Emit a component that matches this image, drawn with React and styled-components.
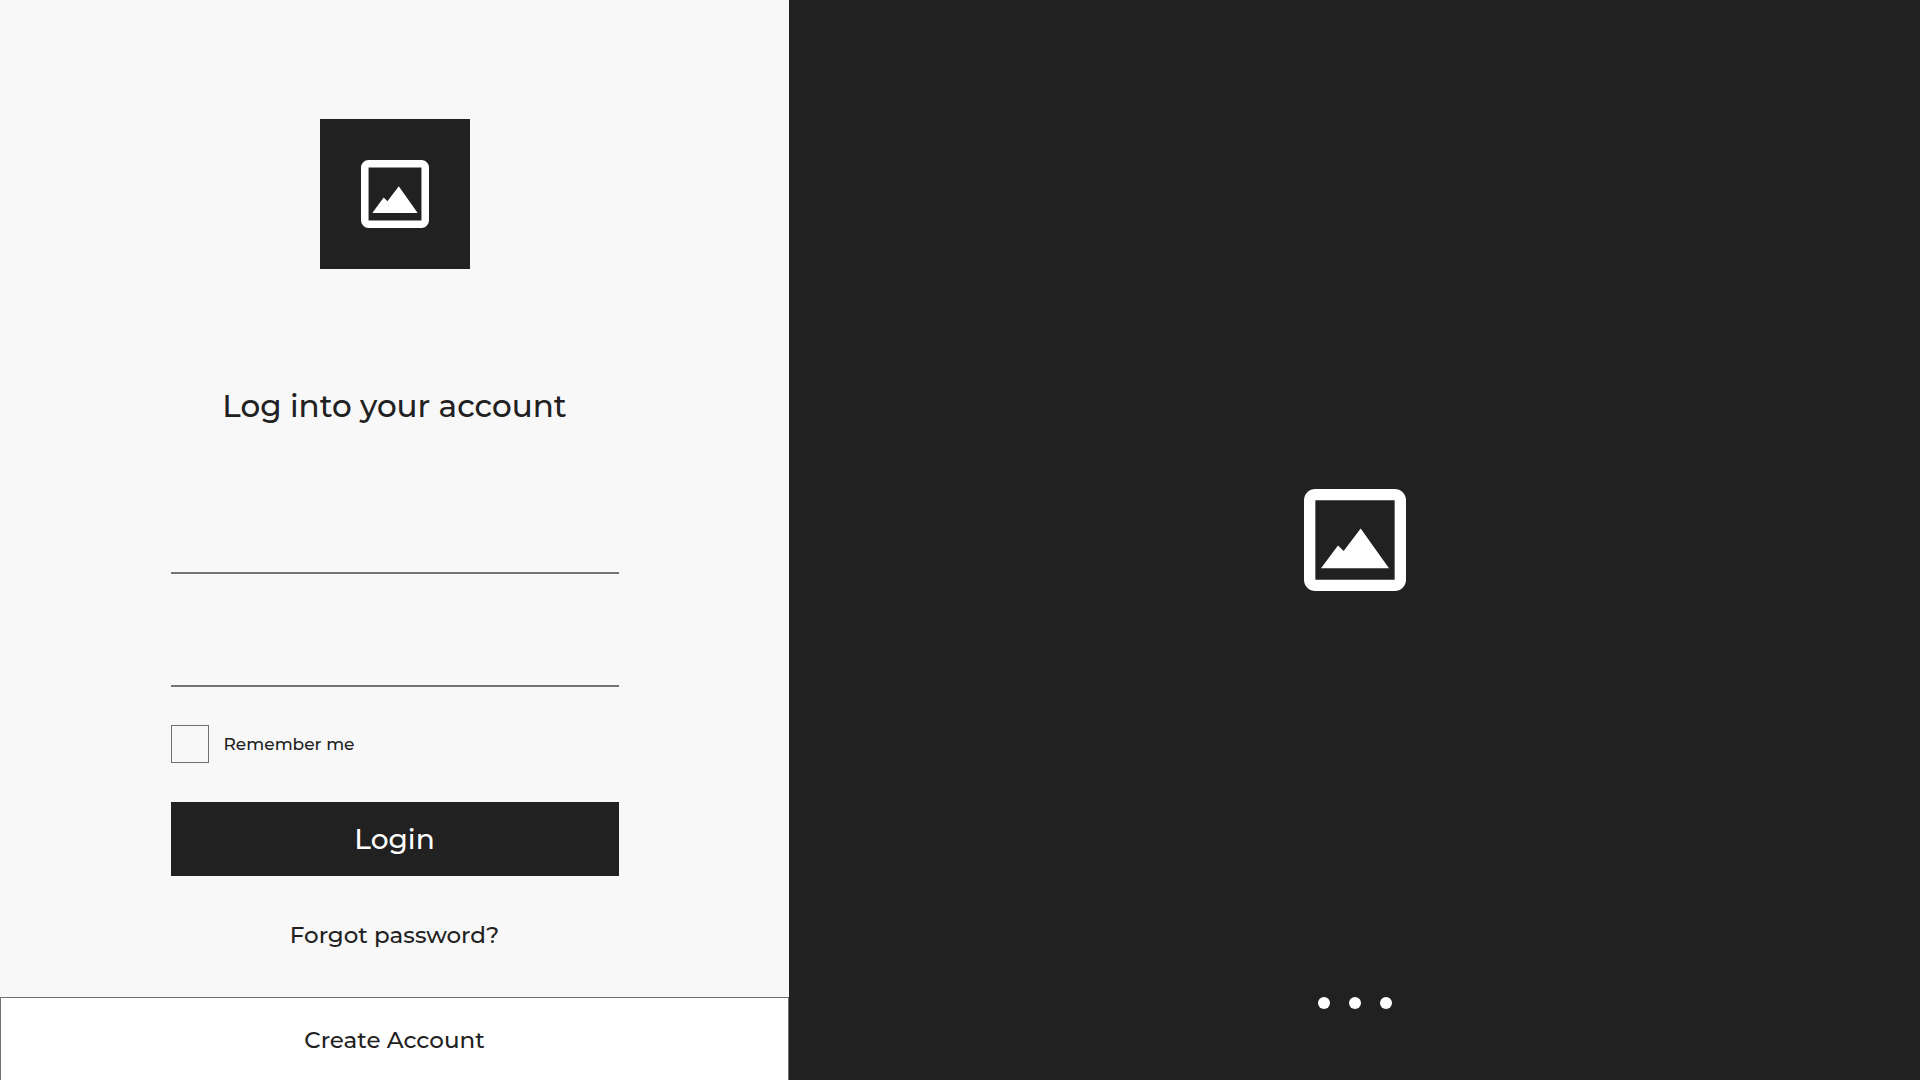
import React from "react";
import styled, { createGlobalStyle } from "styled-components";

const GlobalStyle = createGlobalStyle`
  *, *::before, *::after { box-sizing: border-box; }
  body {
    margin: 0;
    background: #212121;
    color: #212121;
    font-family: Montserrat, Inter, "Liberation Sans", sans-serif;
    font-weight: 500;
  }
`;

const Page = styled.main`
  display: grid;
  grid-template-columns: minmax(0, 789fr) minmax(0, 1131fr);
  min-height: 100vh;
`;

const Panel = styled.section`
  display: flex;
  flex-direction: column;
  justify-content: space-between;
  background: #f8f8f8;
`;

const Content = styled.div`
  display: flex;
  flex-direction: column;
  align-items: center;
  padding: 119px 24px 47px;
`;

const Logo = styled.div`
  display: grid;
  place-items: center;
  width: 150px;
  height: 150px;
  background: #212121;
`;

const Title = styled.h1`
  margin: 117px 0 94px;
  font-size: 31px;
  line-height: 40px;
  font-weight: 500;
`;

const Form = styled.form`
  display: flex;
  flex-direction: column;
  width: 100%;
  max-width: 448px;
`;

const TextInput = styled.input`
  display: block;
  width: 100%;
  height: 54px;
  padding: 0;
  border: 0;
  border-bottom: 2px solid #747474;
  border-radius: 0;
  outline: 0;
  background: transparent;
  color: inherit;
  font: inherit;
  font-size: 23px;
  & + & { margin-top: 59px; }
`;

const Remember = styled.label`
  display: flex;
  align-items: center;
  align-self: flex-start;
  gap: 15px;
  margin: 38px 0 39px;
  font-size: 17px;
  line-height: 24px;
`;

const Checkbox = styled.input`
  appearance: none;
  width: 38px;
  height: 38px;
  margin: 0;
  border: 1px solid #707070;
  background: transparent;
  &:checked { background: #212121; box-shadow: inset 0 0 0 6px #f8f8f8; }
`;

const LoginButton = styled.button`
  height: 74px;
  padding: 0;
  border: 0;
  background: #212121;
  color: #ffffff;
  font: inherit;
  font-size: 28px;
  line-height: 36px;
  cursor: pointer;
`;

const ForgotLink = styled.a`
  margin-top: 44px;
  color: inherit;
  font-size: 23px;
  line-height: 30px;
  text-decoration: none;
`;

const CreateButton = styled.button`
  height: 83px;
  padding: 2px 0 0;
  border: 1px solid #707070;
  border-bottom: 0;
  background: #ffffff;
  color: inherit;
  font: inherit;
  font-size: 23px;
  line-height: 30px;
  cursor: pointer;
`;

const Showcase = styled.section`
  display: grid;
  grid-template-rows: 1fr auto 1fr;
  justify-items: center;
  background: #212121;
`;

const Slide = styled.div`
  grid-row: 2;
  display: flex;
`;

const Dots = styled.nav`
  grid-row: 3;
  align-self: end;
  display: flex;
  gap: 19px;
  padding-bottom: 71px;
`;

const Dot = styled.button`
  width: 12px;
  height: 12px;
  padding: 0;
  border: 0;
  border-radius: 50%;
  background: #ffffff;
  cursor: pointer;
`;

const Icon = styled.svg`
  display: block;
  width: ${({ $size }) => $size}px;
  height: ${({ $size }) => $size}px;
  fill: #ffffff;
`;

function PictureIcon({ size }) {
  return (
    <Icon $size={size} viewBox="0 0 18 18" aria-hidden="true">
      <path
        fillRule="evenodd"
        d="M2 0H16A2 2 0 0 1 18 2V16A2 2 0 0 1 16 18H2A2 2 0 0 1 0 16V2A2 2 0 0 1 2 0ZM2 2V16H16V2Z"
      />
      <path d="M3 14L6 9.95L7 10.95L10 6.95L15 14Z" />
    </Icon>
  );
}

export default function App() {
  return (
    <>
      <GlobalStyle />
      <Page>
        <Panel>
          <Content>
            <Logo>
              <PictureIcon size={68} />
            </Logo>
            <Title>Log into your account</Title>
            <Form onSubmit={(event) => event.preventDefault()}>
              <TextInput type="text" aria-label="Username" autoComplete="username" />
              <TextInput type="password" aria-label="Password" autoComplete="current-password" />
              <Remember>
                <Checkbox type="checkbox" />
                Remember me
              </Remember>
              <LoginButton type="submit">Login</LoginButton>
            </Form>
            <ForgotLink href="#forgot">Forgot password?</ForgotLink>
          </Content>
          <CreateButton type="button">Create Account</CreateButton>
        </Panel>
        <Showcase>
          <Slide>
            <PictureIcon size={102} />
          </Slide>
          <Dots aria-label="Slides">
            {[1, 2, 3].map((n) => (
              <Dot key={n} type="button" aria-label={`Slide ${n}`} />
            ))}
          </Dots>
        </Showcase>
      </Page>
    </>
  );
}
